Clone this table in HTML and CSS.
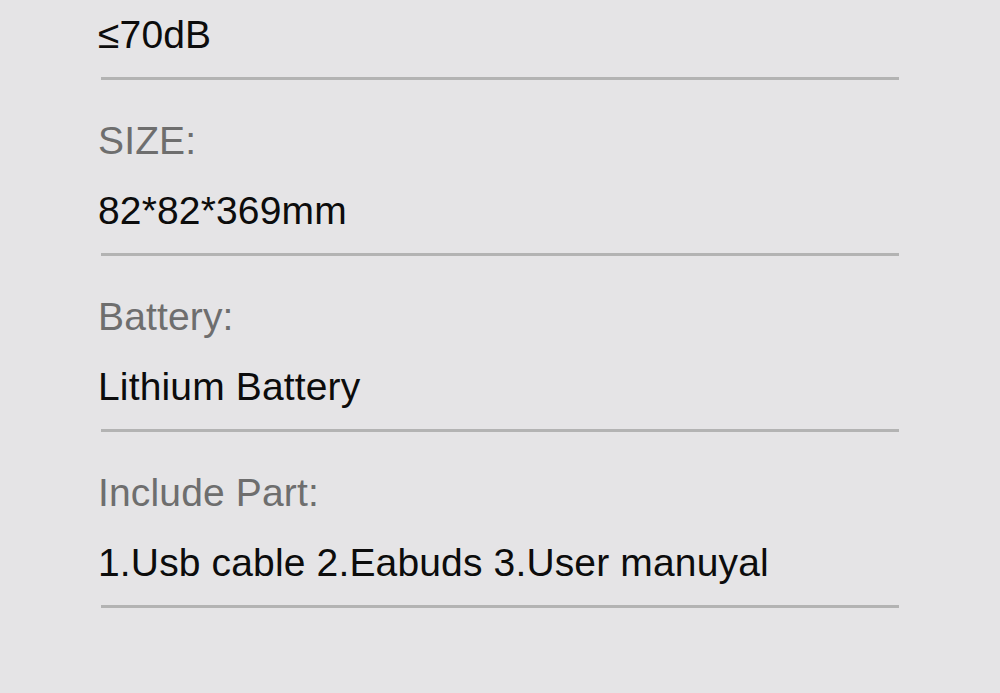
FILE: index.html
```html
<!DOCTYPE html>
<html lang="en">
<head>
<meta charset="utf-8">
<title>Specifications</title>
<link rel="stylesheet" href="styles.css">
</head>
<body>
<div class="spec-list">
  <div class="spec-row spec-row--first">
    <div class="spec-value">≤70dB</div>
    <div class="spec-rule"></div>
  </div>
  <div class="spec-row">
    <div class="spec-label">SIZE:</div>
    <div class="spec-value">82*82*369mm</div>
    <div class="spec-rule"></div>
  </div>
  <div class="spec-row">
    <div class="spec-label">Battery:</div>
    <div class="spec-value">Lithium Battery</div>
    <div class="spec-rule"></div>
  </div>
  <div class="spec-row">
    <div class="spec-label">Include Part:</div>
    <div class="spec-value">1.Usb cable 2.Eabuds 3.User manuyal</div>
    <div class="spec-rule"></div>
  </div>
</div>
</body>
</html>
```
FILE: styles.css
```css
html, body {
  margin: 0;
  padding: 0;
  background: #e5e4e6;
}
body {
  width: 1000px;
  height: 693px;
  overflow: hidden;
  font-family: "Liberation Sans", Arial, sans-serif;
}
.spec-list {
  display: flex;
  flex-direction: column;
  padding: 13px 0 0 98px;
}
.spec-row {
  display: flex;
  flex-direction: column;
  padding-top: 39px;
}
.spec-row--first {
  padding-top: 0;
}
.spec-label {
  font-size: 39px;
  line-height: 44px;
  letter-spacing: 0.15px;
  color: #6e6e6e;
  margin-bottom: 26px;
  white-space: nowrap;
}
.spec-value {
  font-size: 39px;
  line-height: 44px;
  letter-spacing: 0.15px;
  color: #0c0c0c;
  white-space: nowrap;
}
.spec-rule {
  margin: 20px 0 0 3px;
  width: 798px;
  height: 3px;
  background: #b3b3b3;
}
```
